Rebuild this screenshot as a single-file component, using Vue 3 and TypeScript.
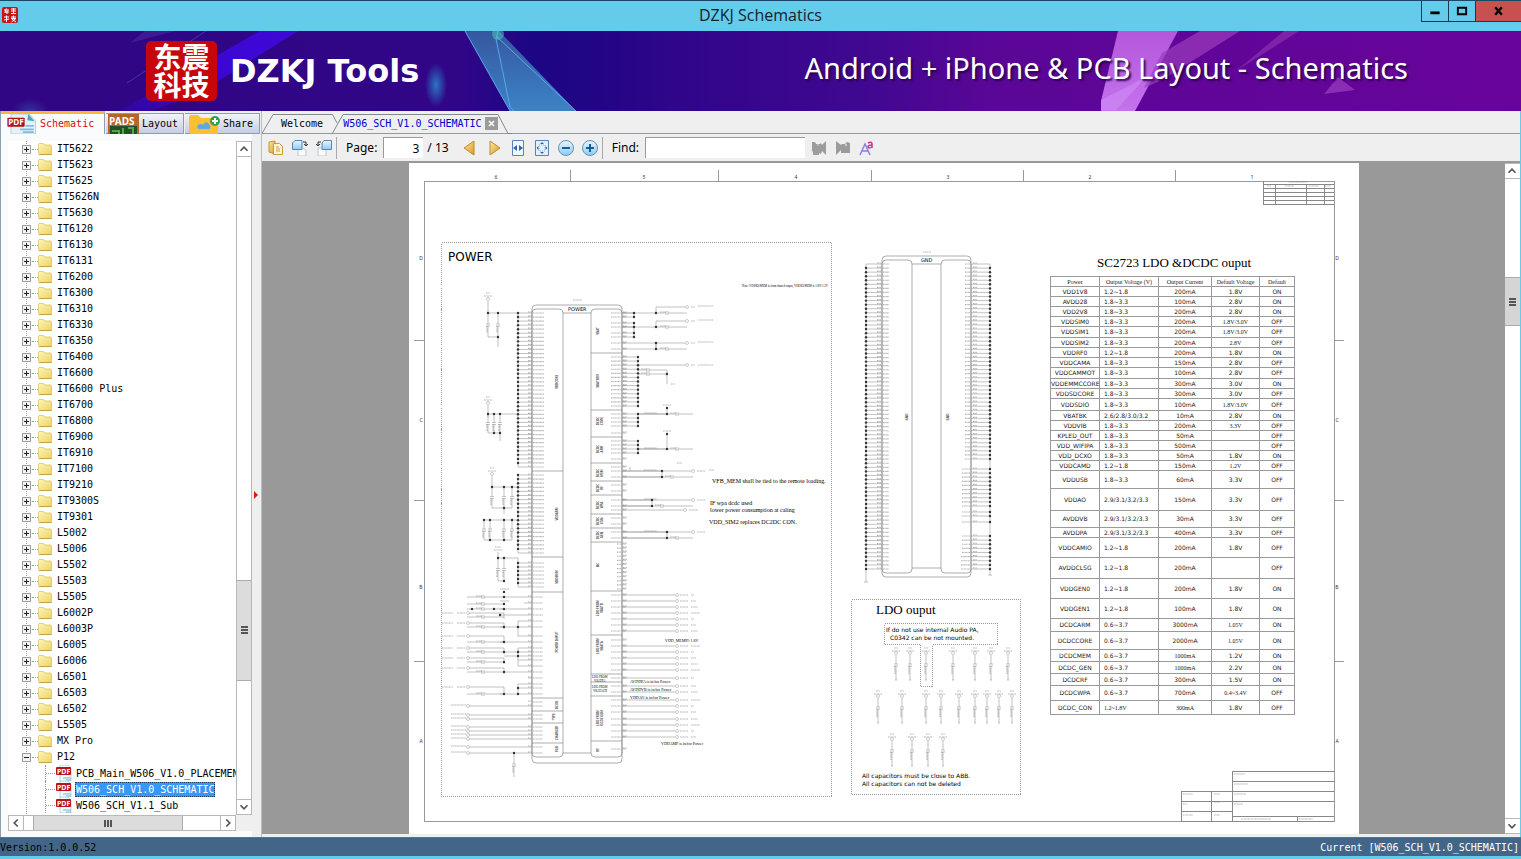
<script setup lang="ts">
import { ref } from 'vue'

interface Row { name: string; volt: string; cur: string; def: string; state: string; h: number; serif?: string }
interface Pt { x: number; y: number }
interface Word extends Pt { t: string }

const page = ref('3')
const find = ref('')
const folders: string[] = [
  'IT5622', 'IT5623', 'IT5625', 'IT5626N', 'IT5630', 'IT6120', 'IT6130', 'IT6131', 'IT6200', 'IT6300',
  'IT6310', 'IT6330', 'IT6350', 'IT6400', 'IT6600', 'IT6600 Plus', 'IT6700', 'IT6800', 'IT6900', 'IT6910',
  'IT7100', 'IT9210', 'IT9300S', 'IT9301', 'L5002', 'L5006', 'L5502', 'L5503', 'L5505', 'L6002P', 'L6003P',
  'L6005', 'L6006', 'L6501', 'L6503', 'L6502', 'L5505', 'MX Pro', 'P12',
]
const files: string[] = ['PCB_Main_W506_V1.0_PLACEMENT', 'W506_SCH_V1.0_SCHEMATIC', 'W506_SCH_V1.1_Sub']
const selected = ref(files[1])

function row(name: string, volt: string, cur: string, def: string, state: string, h: number, serif = ''): Row {
  return { name, volt, cur, def, state, h, serif }
}
const rows: Row[] = [
  row('VDD1V8', '1.2~1.8', '200mA', '1.8V', 'ON', 10),
  row('AVDD28', '1.8~3.3', '100mA', '2.8V', 'ON', 10),
  row('VDD2V8', '1.8~3.3', '200mA', '2.8V', 'ON', 10),
  row('VDDSIM0', '1.8~3.3', '200mA', '1.8V/3.0V', 'OFF', 10, 'def'),
  row('VDDSIM1', '1.8~3.3', '200mA', '1.8V/3.0V', 'OFF', 11, 'def'),
  row('VDDSIM2', '1.8~3.3', '200mA', '2.8V', 'OFF', 10, 'def'),
  row('VDDRF0', '1.2~1.8', '200mA', '1.8V', 'ON', 10),
  row('VDDCAMA', '1.8~3.3', '150mA', '2.8V', 'OFF', 10),
  row('VDDCAMMOT', '1.8~3.3', '100mA', '2.8V', 'OFF', 11),
  row('VDDEMMCCORE', '1.8~3.3', '300mA', '3.0V', 'ON', 10),
  row('VDDSDCORE', '1.8~3.3', '300mA', '3.0V', 'OFF', 10),
  row('VDDSDIO', '1.8~3.3', '100mA', '1.8V/3.0V', 'OFF', 12, 'def'),
  row('VBATBK', '2.6/2.8/3.0/3.2', '10mA', '2.8V', 'ON', 10),
  row('VDDVIB', '1.8~3.3', '200mA', '3.3V', 'OFF', 10, 'def'),
  row('KPLED_OUT', '1.8~3.3', '50mA', '', 'OFF', 10),
  row('VDD_WIFIPA', '1.8~3.3', '500mA', '', 'OFF', 10),
  row('VDD_DCXO', '1.8~3.3', '50mA', '1.8V', 'ON', 10),
  row('VDDCAMD', '1.2~1.8', '150mA', '1.2V', 'OFF', 10, 'def'),
  row('VDDUSB', '1.8~3.3', '60mA', '3.3V', 'OFF', 18),
  row('VDDAO', '2.9/3.1/3.2/3.3', '150mA', '3.3V', 'OFF', 22),
  row('AVDDVB', '2.9/3.1/3.2/3.3', '30mA', '3.3V', 'OFF', 17),
  row('AVDDPA', '2.9/3.1/3.2/3.3', '400mA', '3.3V', 'OFF', 10),
  row('VDDCAMIO', '1.2~1.8', '200mA', '1.8V', 'OFF', 20),
  row('AVDDCLSG', '1.2~1.8', '200mA', '', 'OFF', 21),
  row('VDDGEN0', '1.2~1.8', '200mA', '1.8V', 'ON', 20),
  row('VDDGEN1', '1.2~1.8', '100mA', '1.8V', 'ON', 20),
  row('DCDCARM', '0.6~3.7', '3000mA', '1.05V', 'ON', 13, 'def'),
  row('DCDCCORE', '0.6~3.7', '2000mA', '1.05V', 'ON', 18, 'def'),
  row('DCDCMEM', '0.6~3.7', '1000mA', '1.2V', 'ON', 12, 'cur'),
  row('DCDC_GEN', '0.6~3.7', '1000mA', '2.2V', 'ON', 12, 'cur'),
  row('DCDCRF', '0.6~3.7', '300mA', '1.5V', 'ON', 12),
  row('DCDCWPA', '0.6~3.7', '700mA', '0.4~3.4V', 'OFF', 15, 'def'),
  row('DCDC_CON', '1.2~1.8V', '300mA', '1.8V', 'OFF', 14, 'volt cur'),
]

/* Schematic geometry: wires, junction dots and fine label marks */
const wires: string[] = []
const marks: string[] = []
const dots: Pt[] = []
const ports: Pt[] = []
const h = (x1: number, x2: number, y: number) => { wires.push(`M${x1} ${y}H${x2}`) }
const v = (x: number, y1: number, y2: number) => { wires.push(`M${x} ${y1}V${y2}`) }
const m = (x1: number, x2: number, y: number) => { marks.push(`M${x1} ${y}H${x2}`) }
const mv = (x: number, y1: number, y2: number) => { marks.push(`M${x} ${y1}V${y2}`) }
const dot = (x: number, y: number) => { dots.push({ x, y }) }
const series = (a: number, b: number, n: number) => Array.from({ length: n }, (_, i) => a + ((b - a) * i) / (n - 1))

function cap(x: number, y1: number, y2: number) {
  const c = (y1 + y2) / 2
  v(x, y1, c - 1); v(x, c + 1, y2)
  h(x - 2, x + 2, c - 1); h(x - 2, x + 2, c + 1)
  mv(x - 1, c + 1, c + 8)
}
function hcap(x1: number, x2: number, y: number, c: number) {
  h(x1, c - 1, y); h(c + 1, x2, y); v(c - 1, y - 2, y + 2); v(c + 1, y - 2, y + 2)
  m(c - 7, c - 1, y - 1)
}
function supply(x: number, y: number) {
  m(x - 2, x + 2, y); m(x - 4, x + 4, y + 3); ports.push({ x, y: y + 6 }); v(x, y + 8, y + 20)
}

// power chip, left side
const leftGroups: [number, number, number][] = [[313, 467, 39], [475, 553, 20], [563, 587, 7]]
leftGroups.forEach(([a, b, n]) => {
  series(a, b, n).forEach((y, i) => {
    h(517, 531, y); m(527, 531, y - 1); m(532, 543, y)
    if (i < n - 1) dot(517, y)
  })
  v(517, a, b)
})
const lowPins = [597, 603, 609, 615, 621, 627, 636, 642, 648, 652, 656, 660, 666, 672, 678, 684, 688, 694]
lowPins.forEach((y, i) => { h([503, 523, 499, 499, 517, 499, 517, 499, 517, 503, 503, 517, 517, 503, 527, 517, 517, 499][i], 531, y); m(527, 531, y - 1); m(532, 542, y) })
;[702, 706, 715, 719, 727, 731, 735, 739, 747, 753].forEach((y, i) => {
  if (i) { h(468, 531, y); ports.push({ x: 467, y }); m(450, 465, y - 1) }
  m(527, 531, y - 1); m(532, 542, y)
})
;[613, 623, 636, 648, 658, 668, 687].forEach((y) => { h(468, 503, y); v(503, y, y + 6); ports.push({ x: 467, y }); m(456, 464, y); m(441, 452, y) })
;[597, 604, 609, 617, 627, 642, 652, 662, 672, 694].forEach((y) => hcap(466, 503, y, 482))
;[[503, 597], [503, 609], [499, 615], [503, 627], [517, 627], [503, 642], [503, 652], [517, 652], [517, 656], [503, 662], [503, 672], [503, 694], [517, 694], [517, 688], [471, 609], [493, 609], [503, 592], [503, 604], [513, 753]].forEach(([x, y]) => dot(x, y))
v(517, 621, 636); v(517, 648, 666); v(517, 684, 694); cap(513, 753, 777)
supply(487, 293); supply(487, 397); supply(491, 468)
h(487, 517, 313); cap(487, 313, 337); cap(497, 313, 337); h(487, 497, 337); v(497, 337, 347)
dot(487, 313); dot(497, 313); dot(497, 337)
h(487, 517, 414); [487, 493, 499].forEach((x) => { cap(x, 414, 433); dot(x, 414) }); h(487, 499, 433); v(499, 433, 441); dot(493, 433); dot(499, 433)
h(491, 517, 487); [491, 503, 511].forEach((x) => { cap(x, 487, 508); dot(x, 487) }); h(491, 511, 508); dot(503, 508); v(503, 508, 514)
h(483, 517, 520); [483, 489, 503, 511].forEach((x) => { cap(x, 520, 540); dot(x, 520) }); h(483, 511, 540); dot(489, 540); dot(503, 540)
m(493, 501, 550); m(494, 500, 547); h(497, 517, 558); v(497, 552, 558); cap(497, 558, 581); cap(503, 558, 581); h(497, 503, 581)
v(517, 558, 563); dot(497, 558); dot(503, 558); dot(503, 581); h(499, 508, 589); h(499, 508, 601)

// power chip, right side
const rightPins = [313, 317, 323, 327, 333, 337, 343, 349, ...series(357, 406, 13), 414, 418, 422, 426, 433, 441, 445, 449, 453, 459, 467, 471, 477, 485, 491, 500, 506, 510, 518, 524, 532, 538, ...series(544, 589, 12), 595, 601, 607, 613, 619, 625, 631, 640, 646, 652, 658, 664, 670, 678, 686, 692, 700, 706, 712, 719, 725, 731, 737, 749]
rightPins.forEach((y) => { h(621, 625, y); m(622, 626, y - 1); m(y > 540 && y < 590 ? 616 : 610, 620, y) })
const links: [number, number, number][] = [[633, 313, 317], [633, 323, 337], [655, 343, 349], [637, 357, 406], [637, 414, 426], [637, 441, 453], [629, 467, 471]]
links.forEach(([x, a, b]) => v(x, a, b))
;[313, 317, 323, 327, 333, 337].forEach((y) => { h(621, 633, y); dot(633, y) })
series(357, 406, 13).forEach((y) => { h(621, 637, y); dot(637, y) })
;[414, 418, 422, 426, 441, 445, 449, 453].forEach((y) => { h(621, 637, y); dot(637, y) })
;[[313, 307], [327, 321], [349, 343]].forEach(([a, b]) => {
  h(621, 655, a); hcap(655, 686, a, 666); v(655, b, a); h(655, 684, b); ports.push({ x: 686, y: b }); dot(655, a)
  m(690, 694, b); m(697, 712, b - 1)
})
h(621, 655, 343); dot(655, 343)
h(637, 684, 365); ports.push({ x: 686, y: 365 }); m(690, 694, 365); m(697, 712, 365)
hcap(637, 666, 370, 647); hcap(637, 666, 374, 647); v(666, 370, 384); dot(666, 374); m(670, 674, 384)
;[[414, 637, 666], [449, 637, 666], [471, 621, 661], [477, 621, 661], [500, 621, 651], [506, 621, 651], [532, 621, 666], [538, 621, 666]].forEach(([y, a, b], i) => {
  h(a, b, y)
  if (i % 2 === 0 || i === 1) m(643, 656, y - 1)
  if (i === 2 || i === 4 || i === 6) { h(a, 690, y); ports.push({ x: 692, y }); m(696, 704, y) } else hcap(a, 692, y, b + 10)
  dot(b, y)
})
v(666, 408, 414); dot(666, 408); m(662, 670, 405); v(666, 434, 449); dot(666, 434); m(662, 670, 431)
v(661, 471, 477); v(651, 500, 506); v(666, 532, 538); h(621, 682, 510); ports.push({ x: 684, y: 510 }); m(688, 697, 510); m(708, 713, 470); m(676, 681, 463)
;[595, 601, 607, 613, 619, 625, 631, 646, 652, 658, 664, 670, 678, 686, 692, 700, 706, 712, 719, 725, 731, 737].forEach((y, i) => {
  h(621, 674, y); ports.push({ x: 676, y }); m(679, 687, y); m(690, 693 + (i % 4) * 2, y)
})

// ground chip
series(264, 569, 76).forEach((y, i) => { h(865, 881, y); m(876, 880, y - 1); m(882, 888, y); if (i) dot(865, y) })
v(865, 264, 582); h(863, 867, 582)
;[...series(264, 459, 49), ...series(469, 506, 10), 512, 516, 522, ...series(536, 569, 9)].forEach((y, i) => {
  h(970, 989, y); m(972, 976, y - 1); m(i > 66 ? 960 : i > 48 ? 961 : 964, 969, y); if (i) dot(989, y)
})
v(989, 264, 575); h(987, 991, 575)

// decoupling capacitors of the LDO outputs
const banks: [number, number[]][] = [
  [648, [895, 909, 925, 952, 974, 990, 1007]],
  [691, [877, 901, 925, 940, 958, 974, 986, 998, 1011]],
  [734, [891, 911, 927, 942]],
]
banks.forEach(([y, xs]) => xs.forEach((x) => {
  m(x - 2, x + 2, y); m(x - 4, x + 4, y + 3); ports.push({ x, y: y + 5 }); v(x, y + 7, y + 16)
  h(x - 2, x + 2, y + 16); h(x - 2, x + 2, y + 18); v(x, y + 18, y + 32); mv(x - 1, y + 18, y + 26); h(x - 1, x + 1, y + 32)
}))

const leftDiv = [471, 557, 592, 698, 711, 723, 743]
const rightDiv = [353, 410, 437, 463, 481, 495, 514, 528, 542, 591, 635, 674, 682, 696, 741]
const frames = [
  'M423 181H1333V821H423Z', 'M569 170V181M717 170V181M870 170V181M1022 170V181M1174 170V181',
  'M413 340H423M413 500H423M413 661H423M1333 340H1343M1333 500H1343M1333 661H1343',
].join('')
const blocks = 'M1262 181V204H1333M1262 184H1333M1262 188H1333M1262 192H1333M1262 196H1333M1262 200H1333M1274 184V204M1305 184V204M1323 184V204' +
  'M1333 771H1231V821M1231 781H1333M1180 821V791H1333M1180 801H1333M1231 816H1333M1180 811H1231M1210 791V821M1296 816V821M1180 821H1333'
const blockMarks = 'M1288 182H1306M1266 186H1270M1284 186H1293M1308 186H1318M1324 186H1330M1233 774H1244M1233 784H1247M1233 794H1245M1233 804H1242M1240 819H1270M1298 819H1312' +
  'M1182 794H1192M1182 804H1186M1182 815H1192M1213 794H1219M1213 802H1219M1213 815H1219M922 252H930M572 300H581'
const cols: Word[] = [['6', 495], ['5', 643], ['4', 795], ['3', 947], ['2', 1089], ['1', 1251]].map(([t, x]) => ({ t: String(t), x: Number(x), y: 179 }))
const zones: Word[] = [['D', 260], ['C', 422], ['B', 589], ['A', 743]].flatMap(([t, y]) => [{ t: String(t), x: 420, y: Number(y) }, { t: String(t), x: 1336, y: Number(y) }])
const vertical: Word[] = [
  { t: 'VDDCORE', x: 557, y: 382 }, { t: 'VDDARM', x: 557, y: 514 }, { t: 'VDDMEM', x: 557, y: 577 }, { t: 'POWER INPUT', x: 557, y: 642 },
  { t: 'DCXO', x: 557, y: 705 }, { t: 'TYPE', x: 554, y: 717 }, { t: 'CHARGER', x: 557, y: 733 }, { t: 'FGU', x: 557, y: 749 },
  { t: 'VBAT', x: 598, y: 331 }, { t: 'VBATDRV', x: 598, y: 381 }, { t: 'DCDC', x: 598, y: 421 }, { t: 'CORE', x: 602, y: 421 },
  { t: 'DCDC', x: 598, y: 449 }, { t: 'ARM', x: 602, y: 449 }, { t: 'DCDC', x: 598, y: 473 }, { t: 'MEM', x: 602, y: 473 }, { t: 'DCDC', x: 598, y: 488 }, { t: 'RF', x: 602, y: 488 },
  { t: 'DCDC', x: 598, y: 505 }, { t: 'WPA', x: 602, y: 505 }, { t: 'DCDC', x: 598, y: 521 }, { t: 'CON', x: 602, y: 521 },
  { t: 'DCDC', x: 598, y: 535 }, { t: 'GEN', x: 602, y: 535 }, { t: 'NC', x: 598, y: 565 }, { t: 'LDO FROM', x: 598, y: 608 }, { t: 'VBATD', x: 602, y: 608 },
  { t: 'LDO FROM', x: 598, y: 646 }, { t: 'VBATA', x: 602, y: 646 }, { t: 'LDO FROM', x: 598, y: 718 }, { t: 'DCDC GEN', x: 602, y: 718 }, { t: 'RF', x: 598, y: 750 },
  { t: 'GND', x: 907, y: 417 }, { t: 'GND', x: 948, y: 417 },
]
const tiny: Word[] = [
  { t: 'AVDDPA is in/for Power', x: 629, y: 683 }, { t: 'AVDDVB is in/for Power', x: 629, y: 691 },
  { t: 'VDDAO is in/for Power', x: 629, y: 699 }, { t: 'VDDAMP is in/for Power', x: 660, y: 745 }, { t: 'VDD_MEMIO 1.8V', x: 664, y: 642 },
]
const fine: Word[] = [
  { t: 'LDO FROM', x: 591, y: 678 }, { t: 'VBATPA', x: 593, y: 682 }, { t: 'LDO FROM', x: 591, y: 688 }, { t: 'VBATAUX', x: 592, y: 692 },
  { t: 'Note: VDDIO/MEM is from shared ouput, VDDIO/MEM is 1.8V/1.2V', x: 741, y: 287 },
]
const notes: Word[] = [
  { t: 'VFB_MEM shall be tied to the remote loading.', x: 711, y: 483 },
  { t: 'IF  wpa dcdc used', x: 709, y: 505 }, { t: 'lower  power consumption at caling', x: 709, y: 512 },
  { t: 'VDD_SIM2 replaces DC2DC CON.', x: 708, y: 524 },
]
</script>

<template>
  <div class="app">
    <svg class="defs" aria-hidden="true">
      <linearGradient id="fold" x1="0" y1="0" x2="1" y2="1"><stop offset="0" stop-color="#fff6bd" /><stop offset="1" stop-color="#ecd35e" /></linearGradient>
      <linearGradient id="gold" x1="0" y1="0" x2="1" y2="1"><stop offset="0" stop-color="#ffe9a0" /><stop offset="1" stop-color="#d99a1c" /></linearGradient>
      <linearGradient id="sky" x1="0" y1="0" x2="0" y2="1"><stop offset="0" stop-color="#eaf6ff" /><stop offset="1" stop-color="#8ccaf2" /></linearGradient>
      <symbol id="folder" viewBox="0 0 14 14"><path d="M.5 2.500Q.5 1.500 1.500 1.500h4l1 1.500h6q1 0 1 1V12q0 .5-1 .5H1.500q-1 0-1-1z" fill="url(#fold)" stroke="#e6cf73" /><path d="M1 12.500h12.500" stroke="#bfa445" /></symbol>
    </svg>

    <header class="titlebar">
      <svg class="appicon" viewBox="0 0 16 16"><rect width="16" height="16" rx="2" fill="#c9141b" /><path d="M2 3h5M4.500 1.500L3 5h4M5 3.500V7M2.500 6l1-1M9 2h5M9 4h5M11.500 1v5M9 6.500h5M2 10h5M4.500 8.500V15M2 13l5-1M9 10h5M11.500 8.500V11M9 11.500h5L9.500 15M10 12l4 3" stroke="#fff" fill="none" /></svg>
      <h1>DZKJ Schematics</h1>
      <div class="winbtns">
        <button aria-label="Minimize"><svg viewBox="0 0 28 21"><path d="M9 12.500h10" stroke="#000" stroke-width="3" /></svg></button>
        <button aria-label="Maximize"><svg viewBox="0 0 28 21"><path d="M9.500 7h9v7h-9z" fill="none" stroke="#000" stroke-width="2" /></svg></button>
        <button class="close" aria-label="Close"><svg viewBox="0 0 46 21"><path d="M19.500 6.500l7 8m0-8l-7 8" stroke="#000" stroke-width="2.500" /></svg></button>
      </div>
    </header>

    <div class="banner">
      <svg class="art" viewBox="0 0 1521 80" preserveAspectRatio="none">
        <defs>
          <linearGradient id="bg"><stop offset="0" stop-color="#310685" /><stop offset=".3" stop-color="#300687" /><stop offset=".35" stop-color="#1d0683" /><stop offset=".4" stop-color="#230585" /><stop offset=".44" stop-color="#2f058a" /><stop offset=".57" stop-color="#400890" /><stop offset=".65" stop-color="#5a0697" /><stop offset="1" stop-color="#69049a" /></linearGradient>
          <linearGradient id="beam" x1="1" y1="0" x2="0" y2="1"><stop offset="0" stop-color="#4008d8" /><stop offset=".6" stop-color="#3a06d0" /><stop offset="1" stop-color="#330699" /></linearGradient>
          <linearGradient id="shard" x1="0" y1="0" x2="0" y2="1"><stop offset="0" stop-color="#35579f" /><stop offset="1" stop-color="#3c83c6" /></linearGradient>
          <linearGradient id="pink" x1="0" y1="0" x2="0" y2="1"><stop offset="0" stop-color="#b457da" /><stop offset="1" stop-color="#c472ee" /></linearGradient>
          <radialGradient id="spot"><stop offset="0" stop-color="#2b75c2" /><stop offset="1" stop-color="#2b75c2" stop-opacity="0" /></radialGradient>
        </defs>
        <rect width="1521" height="80" fill="url(#bg)" />
        <path d="M260 0h38L196 64l-46 16h-30z" fill="url(#beam)" />
        <path d="M206 0L127 52" stroke="#5151bc" opacity=".6" />
        <path d="M130 12l45-12h-30z" fill="#4f3aa0" opacity=".4" />
        <ellipse cx="436" cy="54" rx="11" ry="22" fill="url(#spot)" />
        <ellipse cx="30" cy="80" rx="18" ry="12" fill="url(#spot)" opacity=".4" />
        <path d="M465 0h34l77 80h-66z" fill="url(#shard)" />
        <path d="M465 0l45 80M498 0l-2 8 14 68 4 4M496 5l80 75" stroke="#5ea5ed" fill="none" />
        <circle cx="498" cy="3" r="6" fill="#4bd0ba" opacity=".5" />
        <path d="M1118 0h60l-43 80h-34v-10z" fill="url(#pink)" />
        <path d="M1200 0h40l-78 49-18 8 18-35z" fill="#9c3cbd" opacity=".7" />
        <path d="M1284 0h15l-63 40z" fill="#8b2fb0" opacity=".7" />
        <path d="M1324 63l14-17 17 13z" fill="#892db6" />
        <path d="M1101 69l45-23-30 33h-15z" fill="#d492f5" opacity=".5" />
      </svg>
      <div class="brand"><span class="seal">东震<br>科技</span><strong>DZKJ Tools</strong></div>
      <p class="slogan">Android + iPhone &amp; PCB Layout - Schematics</p>
    </div>

    <div class="body">
      <aside class="side">
        <nav class="sidetabs">
          <button class="on"><svg viewBox="0 0 34 22"><path d="M6 0h20l7 7v15H6z" fill="#e5f1f5" stroke="#b6ccd5" /><path d="M25 0l7 8-8-1z" fill="#4ba4c8" /><path d="M22 13h9M16 17h15M19 20h12" stroke="#86b9de" stroke-width="2" /><rect x="2" y="4" width="19" height="10" rx="1" fill="#af1219" /><text x="3" y="12" font-family="Noto Sans, sans-serif" font-weight="700" font-size="9" fill="#fff">PDF</text></svg>Schematic</button>
          <button class="lay"><svg viewBox="0 0 31 20"><rect width="31" height="20" fill="#b7642b" /><path d="M2 12h27v8H2z" fill="#244f27" /><path d="M4 17h7v3M15 14v6M20 14h5v6" stroke="#53a548" stroke-width="2" fill="none" /><text x="1" y="11" font-family="Noto Sans, sans-serif" font-weight="700" font-size="10" fill="#fff">PADS</text></svg>Layout</button>
          <button class="share"><svg viewBox="0 0 31 20"><path d="M0 3q0-2 2-2h7l3 3h14q3 0 3 3v13H3q-3 0-3-3z" fill="#fbc02f" /><path d="M9 15c-3-5 4-6 5-4 3-7 9 1 7 4z" fill="#5ea8e9" /><circle cx="26" cy="7" r="5" fill="#35a148" /><path d="M23 7h6M26 4v6" stroke="#fff" stroke-width="2" /></svg>Share</button>
        </nav>
        <div class="treebox">
          <ul class="tree">
            <li v-for="(f, i) in folders" :key="i" class="node">
              <button class="toggle" :aria-label="'Toggle ' + f"><svg viewBox="0 0 9 9"><path d="M.5.500h8v8h-8z" fill="#f3f3f3" stroke="#9b9b9b" /><path :d="f === 'P12' ? 'M2 4.500h5' : 'M2 4.500h5M4.500 2v5'" stroke="#222" /></svg></button>
              <span class="twig"></span><svg class="ficon"><use href="#folder" /></svg><span class="label">{{ f }}</span>
            </li>
            <li v-for="f in files" :key="f" class="node file">
              <span class="twig"></span>
              <svg class="picon" viewBox="0 0 16 16"><path d="M4 0h8l3 3v13H4z" fill="#f4f9fc" stroke="#b7d5e3" /><path d="M7 13h8M10 15h5" stroke="#79b5d6" /><rect y="2" width="15" height="8" rx="1" fill="#b3141d" /><text x="1" y="9" font-family="Noto Sans, sans-serif" font-weight="700" font-size="7" fill="#fff">PDF</text></svg>
              <button class="label" :class="{ sel: f === selected }" @click="selected = f">{{ f }}</button>
            </li>
          </ul>
          <div class="vbar">
            <button aria-label="Up"><svg viewBox="0 0 16 16"><path d="M4 10l4-4 4 4" /></svg></button>
            <span class="thumb tall"><i></i></span>
            <button aria-label="Down"><svg viewBox="0 0 16 16"><path d="M4 6l4 4 4-4" /></svg></button>
          </div>
          <div class="hbar">
            <button aria-label="Left"><svg viewBox="0 0 16 16"><path d="M10 4L6 8l4 4" /></svg></button>
            <span class="thumb wide"><i></i></span>
            <button aria-label="Right"><svg viewBox="0 0 16 16"><path d="M6 4l4 4-4 4" /></svg></button>
          </div>
          <span class="corner"></span>
        </div>
      </aside>
      <div class="splitter"><svg viewBox="0 0 4 8"><path d="M0 0l4 4-4 4z" fill="#e3180c" /></svg></div>

      <main class="main">
        <nav class="doctabs">
          <svg class="tablines" viewBox="0 0 250 24"><path d="M11 3.500H70.500M70.500 3.500L75 12" /><path d="M0 22.500L11 3.500M70 23L81 3.500H236L246 22.500H250" /></svg>
          <button class="welcome">Welcome</button>
          <button class="doc">W506_SCH_V1.0_SCHEMATIC</button>
          <button class="x" aria-label="Close tab"><svg viewBox="0 0 13 13"><path d="M4 4l5 5m0-5L4 9" stroke="#fff" stroke-width="1.500" /></svg></button>
        </nav>
        <div class="toolbar">
          <button aria-label="Open"><svg viewBox="0 0 16 16"><path d="M1 2l6-1v13l-6-2z" fill="url(#gold)" stroke="#c4933a" /><path d="M5.500 3.500h6l3 3v8h-9z" fill="#fff4d5" stroke="#ca9b43" /><path d="M8 7h3M8 9h4M8 11h4" stroke="#ce9d46" /></svg></button>
          <button aria-label="Rotate right"><svg viewBox="0 0 16 16"><path d="M6 8h5l3 2v6H6z" fill="#f8fbfd" stroke="#bdc6cc" /><path d="M3 .5h7v9H.5V3z" fill="url(#sky)" stroke="#5d87a9" /><path d="M11 2h3v3M12 4l2 2 2-2" fill="none" stroke="#333" /></svg></button>
          <button aria-label="Rotate left"><svg viewBox="0 0 16 16"><path d="M2 8h5l3 2v6H2z" fill="#f8fbfd" stroke="#bdc6cc" /><path d="M8 .5h7.500v9H6V3z" fill="url(#sky)" stroke="#5d87a9" /><path d="M5 2H2v3M0 4l2 2 2-2" fill="none" stroke="#333" /></svg></button>
          <span class="sep"></span>
          <label for="pg">Page:</label><input id="pg" v-model="page" class="pg"><span class="total">/ 13</span>
          <button class="tri" aria-label="Previous"><svg viewBox="0 0 16 16"><path d="M13 1v14L3 8z" fill="url(#gold)" stroke="#b98c2c" /></svg></button>
          <button class="tri next" aria-label="Next"><svg viewBox="0 0 16 16"><path d="M3 1v14l10-7z" fill="url(#gold)" stroke="#b98c2c" /></svg></button>
          <button aria-label="Fit width"><svg viewBox="0 0 16 16"><path d="M2.500.500h11v15h-11z" fill="#eef7ff" stroke="#5b83b3" /><path d="M3 8l4-3v6zM13 8L9 5v6z" fill="#2d67ad" /></svg></button>
          <button aria-label="Fit page"><svg viewBox="0 0 16 16"><path d="M1.500.500h13v15h-13z" fill="#e3f1ff" stroke="#5b83b3" /><path d="M8 2l2 2H6zM8 14l2-2H6zM2.500 8l2-2v4zM13.500 8l-2-2v4z" fill="#2d67ad" /><path d="M5 5h6v6H5z" fill="none" stroke="#8cabd0" stroke-dasharray="1 1" /></svg></button>
          <button aria-label="Zoom out"><svg viewBox="0 0 16 16"><circle cx="8" cy="8" r="7.500" fill="url(#sky)" stroke="#6594b8" /><path d="M4 8h8" stroke="#155c99" stroke-width="2" /></svg></button>
          <button aria-label="Zoom in"><svg viewBox="0 0 16 16"><circle cx="8" cy="8" r="7.500" fill="url(#sky)" stroke="#6594b8" /><path d="M4 8h8M8 4v8" stroke="#155c99" stroke-width="2" /></svg></button>
          <span class="sep"></span>
          <label for="fd">Find:</label><input id="fd" v-model="find" class="fd">
          <button aria-label="Find previous"><svg viewBox="0 0 16 16"><path d="M1 2h3l1 2h4l1-1 1 2 4-4v14l-4-4-1 3-2-1v2H2v-3l-1-1z" fill="#9c9c9c" /><path d="M7 4v2" stroke="#d5d5d5" fill="none" /></svg></button>
          <button aria-label="Find next"><svg viewBox="0 0 16 16"><path d="M15 3l-3-1-2 2H7L6 5 1 1v14l5-5v3h9z" fill="#9c9c9c" /><circle cx="11" cy="5" r="1" fill="#ddd" /></svg></button>
          <button aria-label="Match case"><svg viewBox="0 0 16 16"><path d="M1 15L6 4l5 11M3 11h6" fill="none" stroke="#8b7fe6" stroke-width="1.500" /><path d="M9 3q4-2 4 1v4M13 5q-4 0-4 2 1 2 4 0" fill="none" stroke="#cb3399" stroke-width="1.500" /></svg></button>
        </div>

        <div class="viewer">
          <div class="canvas">
            <svg class="sheet" viewBox="408 163 950 671">
              <rect x="408" y="163" width="950" height="671" fill="#fff" />
              <path :d="frames" class="frame" />
              <path :d="blocks" class="block" />
              <path :d="blockMarks" class="mark" />
              <g class="zone"><text v-for="(w, i) in [...cols, ...zones]" :key="i" :x="w.x" :y="w.y">{{ w.t }}</text></g>
              <path class="dotted" d="M440.500 242.500H830.500V796.500H440.500ZM850.500 599.500H1019.500V794.500H850.500ZM883.500 623.500H996.500V644.500H931.500V686.500H919.500V644.500H883.500Z" />
              <g class="chip">
                <rect x="531" y="305" width="90" height="458" rx="4" /><rect x="531" y="309" width="31" height="448" rx="4" /><rect x="590" y="309" width="31" height="448" rx="4" />
                <path d="M562 313H590M562 753H590" /><path v-for="y in leftDiv" :key="'l' + y" :d="`M531 ${y}H562`" /><path v-for="y in rightDiv" :key="'r' + y" :d="`M590 ${y}H621`" />
                <rect x="881" y="256" width="89" height="321" rx="4" /><rect x="881" y="260" width="30" height="313" rx="4" /><rect x="940" y="260" width="30" height="313" rx="4" />
                <path d="M911 264H940M911 568H940" />
              </g>
              <path :d="wires.join('')" class="wire" />
              <path :d="marks.join('')" class="mark" />
              <circle v-for="(p, i) in ports" :key="'p' + i" :cx="p.x" :cy="p.y" r="1.500" class="port" />
              <circle v-for="(p, i) in dots" :key="'d' + i" :cx="p.x" :cy="p.y" r="1.200" fill="#333" />
              <g class="micro"><text v-for="(w, i) in vertical" :key="i" text-anchor="middle" :transform="`translate(${w.x} ${w.y}) rotate(-90)`">{{ w.t }}</text></g>
              <g class="micro serif"><text v-for="(w, i) in tiny" :key="i" :x="w.x" :y="w.y">{{ w.t }}</text></g>
              <g class="micro fine"><text v-for="(w, i) in fine" :key="i" :x="w.x" :y="w.y">{{ w.t }}</text></g>
              <g class="note"><text v-for="(w, i) in notes" :key="i" :x="w.x" :y="w.y">{{ w.t }}</text></g>
              <text class="head" x="447" y="261">POWER</text>
              <g class="cap"><text x="567" y="311">POWER</text><text x="920" y="262">GND</text></g>
              <g class="cap big">
                <text x="885" y="632">If do not use internal Audio PA,</text><text x="889" y="640">C0342 can be not mounted.</text>
                <text x="861" y="778">All capacitors must be close to ABB.</text><text x="861" y="786">All capacitors can not be deleted</text>
              </g>
              <g class="title"><text x="875" y="614">LDO ouput</text><text x="1096" y="267">SC2723 LDO &amp;DCDC ouput</text></g>
              <foreignObject x="1049" y="276" width="245" height="442">
                <table class="ldo">
                  <colgroup><col class="c1"><col class="c2"><col class="c3"><col class="c4"><col class="c5"></colgroup>
                  <thead><tr><th>Power</th><th>Output Voltage (V)</th><th>Output Current</th><th>Default Voltage</th><th>Default</th></tr></thead>
                  <tbody>
                    <tr v-for="r in rows" :key="r.name" :style="{ height: r.h + 'px' }">
                      <td>{{ r.name }}</td><td class="volt" :class="{ sf: r.serif?.includes('volt') }">{{ r.volt }}</td>
                      <td :class="{ sf: r.serif?.includes('cur') }">{{ r.cur }}</td><td :class="{ sf: r.serif?.includes('def') }">{{ r.def }}</td><td>{{ r.state }}</td>
                    </tr>
                  </tbody>
                </table>
              </foreignObject>
            </svg>
          </div>
          <div class="vbar page-bar">
            <button aria-label="Page up"><svg viewBox="0 0 16 16"><path d="M4 10l4-4 4 4" /></svg></button>
            <span class="thumb short"><i></i></span>
            <button aria-label="Page down"><svg viewBox="0 0 16 16"><path d="M4 6l4 4 4-4" /></svg></button>
          </div>
        </div>
      </main>
    </div>

    <footer class="status"><span>Version:1.0.0.52</span><span class="cur">Current [W506_SCH_V1.0_SCHEMATIC]</span></footer>
  </div>
</template>

<style>
body { margin: 0; overflow: hidden; }
</style>

<style scoped>
* { box-sizing: border-box; }
.app { display: flex; flex-direction: column; height: 100vh; background: #efeff0; font: 10px/16px "DejaVu Sans Mono", "Liberation Mono", monospace; color: #000; }
button { border: 0; padding: 0; margin: 0; background: none; font: inherit; color: inherit; cursor: pointer; }
button svg { display: block; }
.defs { position: absolute; width: 0; height: 0; }

.titlebar { flex: 0 0 31px; display: grid; grid-template-columns: 1fr auto 1fr; background: #65cbea; border-top: 1px solid #194867; }
.appicon { width: 16px; height: 16px; margin: 6px 2px; }
h1 { margin: 0; font: 400 16px/29px "Open Sans", "Noto Sans", sans-serif; color: #10242c; }
.winbtns { display: flex; justify-content: flex-end; height: 21px; }
.winbtns button { width: 27px; border: solid #17394a; border-width: 0 0 1px 1px; }
.winbtns svg { width: 100%; height: 20px; }
.winbtns .close { width: 46px; background: #c75050; }

.banner { flex: 0 0 80px; position: relative; display: flex; justify-content: space-between; align-items: center; padding: 0 113px 0 146px; overflow: hidden; color: #fff; font-family: "Noto Sans", "Noto Sans CJK SC", sans-serif; }
.art { position: absolute; inset: 0; width: 100%; height: 100%; }
.brand { position: relative; display: flex; align-items: center; gap: 13px; }
.seal { width: 71px; height: 60px; border-radius: 5px; background: #c9050c; font: 700 28px/28px "Noto Sans CJK SC", sans-serif; text-align: center; padding-top: 1px; }
.brand strong { font: 700 32px/40px "DejaVu Sans", "Noto Sans", sans-serif; }
.slogan { position: relative; margin: 0 0 6px; font-size: 29px; line-height: 36px; text-shadow: 2px 2px 2px #2b064b; white-space: nowrap; }

.body { flex: 1; min-height: 0; display: flex; border-left: 1px solid #8c9fac; border-right: 1px solid #65cbea; }
.side { flex: 0 0 251px; min-width: 0; display: flex; flex-direction: column; min-height: 0; background: #fafbfc; }
.sidetabs { flex: 0 0 23px; display: flex; align-items: flex-end; width: 259px; gap: 1px; position: relative; background: #efeff0; }
.sidetabs button { display: flex; align-items: center; height: 21px; gap: 3px; padding: 0 4px 0 2px; border: 1px solid #8f9bb0; border-width: 1px 1px 1px 0; background: linear-gradient(#f2f3f9, #c8cce4); }
.sidetabs svg { width: 31px; height: 20px; flex: none; }
.sidetabs .on { height: 23px; width: 104px; padding-left: 4px; color: #d40c15; background: #fafbfc; border-width: 3px 1px 0 0; border-top-color: #f9b53d; }
.sidetabs .on svg { width: 32px; }
.sidetabs .lay { width: 78px; }
.sidetabs .share { width: 75px; padding-left: 4px; }
.treebox { flex: 1; min-height: 0; margin: 7px 0 6px 7px; display: grid; grid-template: minmax(0, 1fr) 16px / minmax(0, 1fr) 16px; background: #fff; }
.tree { list-style: none; margin: 0; padding: 0 0 0 14px; overflow: hidden; background: repeating-linear-gradient(#999 0 1px, #fff 1px 2px) 18px 0 / 1px 100% no-repeat; }
.node { display: flex; align-items: center; height: 16px; white-space: nowrap; }
.toggle { width: 9px; height: 9px; flex: none; }
.toggle svg { width: 9px; height: 9px; }
.twig { flex: 0 0 6px; margin-left: 1px; border-top: 1px dotted #999; }
.ficon { width: 14px; height: 14px; flex: none; }
.ficon + .label { margin-left: 5px; }
.file { padding-left: 23px; }
.file .twig { flex-basis: 11px; margin: 0; height: 16px; border-top: 0; border-left: 1px dotted #999; background: repeating-linear-gradient(90deg, #999 0 1px, #fff 1px 2px) 0 8px / 100% 1px no-repeat; }
.picon { width: 16px; height: 16px; flex: none; }
.file .label { height: 15px; line-height: 15px; padding: 0 1px; margin-left: 3px; }
.file .sel { background: #3697fc; color: #fff; outline: 1px dotted #1a3f63; outline-offset: -1px; }
.vbar, .hbar { display: flex; background: #fff; border: 1px solid #b8b8b8; }
.vbar { flex-direction: column; justify-content: space-between; border-width: 0 1px; }
.hbar { justify-content: space-between; border-width: 1px 0; }
.corner { background: #efeff0; }
.vbar button, .hbar button { border: 1px solid #b8b8b8; background: #fff; flex: 0 0 16px; }
.vbar button { border-width: 1px 0; }
.hbar button { border-width: 0 1px; }
.vbar button svg, .hbar button svg { width: 14px; height: 14px; fill: none; stroke: #555; stroke-width: 2px; }
.thumb { background: #dcdcdc; border: 1px solid #ababab; display: flex; align-items: center; justify-content: center; }
.vbar .thumb { border-width: 1px 0; }
.hbar .thumb { border-width: 0 1px; }
.thumb i { width: 7px; height: 8px; background: repeating-linear-gradient(#555 0 2px, transparent 2px 3px); }
.hbar i { width: 8px; height: 7px; background: repeating-linear-gradient(90deg, #555 0 2px, transparent 2px 3px); }
.vbar .tall { height: 15%; margin: auto 0 118px; }
.wide { width: 66%; margin-right: auto; margin-left: 9px; }
.splitter { flex: 0 0 10px; display: flex; align-items: center; padding: 42px 0 0 2px; background: #efeff0; border-right: 1px solid #b9bfc3; }
.splitter svg { width: 4px; height: 8px; }

.main { flex: 1; min-width: 0; display: flex; flex-direction: column; }
.doctabs { flex: 0 0 23px; display: flex; align-items: center; position: relative; border-bottom: 1px solid #929a9e; padding: 3px 0 0 19px; }
.tablines { position: absolute; left: 0; top: 0; width: 250px; height: 24px; fill: none; stroke: #7d8b91; }
.doctabs button { position: relative; }
.doc { color: #0000d2; margin-left: 20px; }
.x { width: 13px; height: 13px; margin-left: 3px; background: #9b9b9b; }
.toolbar { flex: 0 0 27px; display: flex; align-items: center; gap: 8px; padding-left: 6px; font: 12px/20px "Noto Sans", "Open Sans", sans-serif; }
.toolbar button, .toolbar svg { width: 16px; height: 16px; flex: none; }
.sep { width: 1px; height: 22px; background: #a9a9a9; margin: 0 1px 0 -4px; }
.toolbar input { border: 0; border-top: 1px solid #999; border-left: 1px solid #999; background: #fff; height: 21px; padding: 0 4px; font: inherit; outline: 0; }
.toolbar label { margin-right: -2px; }
.toolbar .pg { width: 40px; text-align: right; }
.total { margin: 0 4px 0 -4px; }
.tri.next { margin: 0 -1px 0 2px; }
.toolbar .fd { width: 160px; margin-right: -2px; }

.viewer { flex: 1; min-height: 0; display: flex; border-top: 2px solid #999; margin-bottom: 3px; background: #999; }
.canvas { flex: 1; min-width: 0; display: flex; justify-content: center; }
.sheet { display: block; height: 100%; max-width: 100%; }
.page-bar { flex: 0 0 15px; border-width: 0; }
.short { height: 49px; margin-bottom: auto; margin-top: 98px; background: #d5d5d5; }

.frame, .block, .wire, .chip, .port, .mark, .dotted { fill: none; stroke: #999; stroke-width: 1px; }
.frame, .block, .dotted { shape-rendering: crispEdges; }
.block { stroke: #888; }
.wire { stroke: #999; stroke-width: .6px; }
.chip { stroke: #777; stroke-width: .6px; }
.port { stroke: #aaa; stroke-width: .6px; fill: #fff; }
.mark { stroke: #777; stroke-width: 1.200px; stroke-dasharray: 1px .4px; opacity: .55; }
.dotted { stroke: #999; stroke-dasharray: 1px 1px; }
.zone { font: 5px "Noto Sans", sans-serif; text-anchor: middle; fill: #333; }
.micro { font: 700 3px "Noto Sans", sans-serif; fill: #555; }
.micro.serif { font: 4px "Liberation Serif", serif; fill: #000; }
.micro.fine { font: 3px "Liberation Serif", serif; fill: #000; }
.note { font: 6px "Liberation Serif", serif; }
.head { font: 12px "DejaVu Sans", "Noto Sans", sans-serif; }
.cap { font: 5px "DejaVu Sans", "Noto Sans", sans-serif; }
.cap.big { font-size: 6px; }
.title { font: 13px "Liberation Serif", serif; }
.ldo { width: 245px; table-layout: fixed; border-collapse: separate; border-spacing: 0; border: solid #999; border-width: 1px 0 0 1px; font: 6px/8px "DejaVu Sans", "Noto Sans", sans-serif; color: #222; text-align: center; }
.ldo th, .ldo td { padding: 0; border: solid #999; border-width: 0 1px 1px 0; white-space: nowrap; }
.ldo th { height: 10px; font: 6px/8px "Liberation Serif", serif; }
.ldo .volt { text-align: left; padding-left: 4px; }
.ldo .sf { font-family: "Liberation Serif", serif; }
.c1 { width: 49px; } .c2 { width: 59px; } .c3 { width: 53px; } .c4 { width: 48px; } .c5 { width: 35px; }

.status { flex: 0 0 22px; display: flex; justify-content: space-between; align-items: center; padding: 1px 2px 0 0; background: #426588; border-top: 1px solid #53768f; border-bottom: 3px solid #65cbea; }
.cur { color: #fff; }
</style>
